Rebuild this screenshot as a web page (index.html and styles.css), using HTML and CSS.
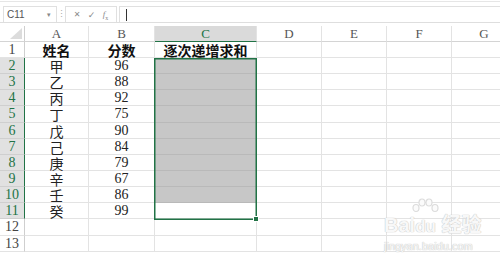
FILE: index.html
```html
<!DOCTYPE html>
<html lang="zh-CN">

<head>
    <meta charset="UTF-8">
    <meta name="viewport" content="width=device-width, initial-scale=1.0">
    <title>逐次递增求和</title>
    <link rel="stylesheet" href="styles.css">
</head>

<body>
    <!-- Formula bar -->
    <div class="formula-bar">
        <div class="name-box">
            <span>C11</span>
            <span class="arrow">▾</span>
        </div>
        <div class="sep">⋮</div>
        <div class="fx-box">
            <span class="fx-icon">✕</span>
            <span class="fx-icon check">✓</span>
            <span class="fx-icon fx"><i>f</i><sub>x</sub></span>
        </div>
        <div class="formula-input"><span class="cursor"></span></div>
    </div>

    <!-- Sheet -->
    <div class="sheet">
        <div class="row head-row">
            <div class="cell rh corner"><span class="tri"></span></div>
            <div class="cell col-a ch">A</div>
            <div class="cell col-b ch">B</div>
            <div class="cell col-c ch active-col">C</div>
            <div class="cell col-d ch">D</div>
            <div class="cell col-e ch">E</div>
            <div class="cell col-f ch">F</div>
            <div class="cell col-g ch">G</div>
        </div>

        <div class="row">
            <div class="cell rh">1</div>
            <div class="cell col-a title">姓名</div>
            <div class="cell col-b title">分数</div>
            <div class="cell col-c title">逐次递增求和</div>
            <div class="cell col-d"></div>
            <div class="cell col-e"></div>
            <div class="cell col-f"></div>
            <div class="cell col-g"></div>
        </div>
        <div class="row">
            <div class="cell rh sel">2</div>
            <div class="cell col-a cn">甲</div>
            <div class="cell col-b num">96</div>
            <div class="cell col-c filled"></div>
            <div class="cell col-d"></div>
            <div class="cell col-e"></div>
            <div class="cell col-f"></div>
            <div class="cell col-g"></div>
        </div>
        <div class="row">
            <div class="cell rh sel">3</div>
            <div class="cell col-a cn">乙</div>
            <div class="cell col-b num">88</div>
            <div class="cell col-c filled"></div>
            <div class="cell col-d"></div>
            <div class="cell col-e"></div>
            <div class="cell col-f"></div>
            <div class="cell col-g"></div>
        </div>
        <div class="row">
            <div class="cell rh sel">4</div>
            <div class="cell col-a cn">丙</div>
            <div class="cell col-b num">92</div>
            <div class="cell col-c filled"></div>
            <div class="cell col-d"></div>
            <div class="cell col-e"></div>
            <div class="cell col-f"></div>
            <div class="cell col-g"></div>
        </div>
        <div class="row tall">
            <div class="cell rh sel">5</div>
            <div class="cell col-a cn">丁</div>
            <div class="cell col-b num">75</div>
            <div class="cell col-c filled"></div>
            <div class="cell col-d"></div>
            <div class="cell col-e"></div>
            <div class="cell col-f"></div>
            <div class="cell col-g"></div>
        </div>
        <div class="row">
            <div class="cell rh sel">6</div>
            <div class="cell col-a cn">戊</div>
            <div class="cell col-b num">90</div>
            <div class="cell col-c filled"></div>
            <div class="cell col-d"></div>
            <div class="cell col-e"></div>
            <div class="cell col-f"></div>
            <div class="cell col-g"></div>
        </div>
        <div class="row">
            <div class="cell rh sel">7</div>
            <div class="cell col-a cn">己</div>
            <div class="cell col-b num">84</div>
            <div class="cell col-c filled"></div>
            <div class="cell col-d"></div>
            <div class="cell col-e"></div>
            <div class="cell col-f"></div>
            <div class="cell col-g"></div>
        </div>
        <div class="row">
            <div class="cell rh sel">8</div>
            <div class="cell col-a cn">庚</div>
            <div class="cell col-b num">79</div>
            <div class="cell col-c filled"></div>
            <div class="cell col-d"></div>
            <div class="cell col-e"></div>
            <div class="cell col-f"></div>
            <div class="cell col-g"></div>
        </div>
        <div class="row">
            <div class="cell rh sel">9</div>
            <div class="cell col-a cn">辛</div>
            <div class="cell col-b num">67</div>
            <div class="cell col-c filled"></div>
            <div class="cell col-d"></div>
            <div class="cell col-e"></div>
            <div class="cell col-f"></div>
            <div class="cell col-g"></div>
        </div>
        <div class="row">
            <div class="cell rh sel">10</div>
            <div class="cell col-a cn">壬</div>
            <div class="cell col-b num">86</div>
            <div class="cell col-c filled"></div>
            <div class="cell col-d"></div>
            <div class="cell col-e"></div>
            <div class="cell col-f"></div>
            <div class="cell col-g"></div>
        </div>
        <div class="row">
            <div class="cell rh sel">11</div>
            <div class="cell col-a cn">癸</div>
            <div class="cell col-b num">99</div>
            <div class="cell col-c"></div>
            <div class="cell col-d"></div>
            <div class="cell col-e"></div>
            <div class="cell col-f"></div>
            <div class="cell col-g"></div>
        </div>
        <div class="row tall">
            <div class="cell rh">12</div>
            <div class="cell col-a"></div>
            <div class="cell col-b"></div>
            <div class="cell col-c"></div>
            <div class="cell col-d"></div>
            <div class="cell col-e"></div>
            <div class="cell col-f"></div>
            <div class="cell col-g"></div>
        </div>
        <div class="row">
            <div class="cell rh">13</div>
            <div class="cell col-a"></div>
            <div class="cell col-b"></div>
            <div class="cell col-c"></div>
            <div class="cell col-d"></div>
            <div class="cell col-e"></div>
            <div class="cell col-f"></div>
            <div class="cell col-g"></div>
        </div>

        <!-- selection frame C2:C11 -->
        <div class="selection"><span class="handle"></span></div>

        <!-- watermark -->
        <div class="watermark">
            <svg class="paw" width="30" height="20" viewBox="0 0 30 20">
                <g fill="#fbfbfb" stroke="#dcdcdc" stroke-width="1.2">
                    <ellipse cx="6" cy="10" rx="3" ry="3.5" />
                    <ellipse cx="12" cy="4.5" rx="3" ry="3.5" />
                    <ellipse cx="19" cy="4.5" rx="3" ry="3.5" />
                    <ellipse cx="25" cy="10" rx="3" ry="3.5" />
                </g>
            </svg>
            <div class="wm-main">Bai<span class="du">du</span> 经验</div>
            <div class="wm-url">jingyan.baidu.com</div>
        </div>
    </div>
</body>

</html>
```

FILE: styles.css
```css
body {
    margin: 0;
    background: #ffffff;
    font-family: "Liberation Serif", "Noto Sans CJK SC", serif;
    overflow: hidden;
    width: 500px;
    height: 257px;
}

/* formula bar */
.formula-bar {
    display: flex;
    align-items: stretch;
    margin-top: 1px;
    border-top: 1px solid #e6e6e6;
    border-bottom: 1px solid #dedede;
    box-sizing: border-box;
    height: 22px;
    padding: 4px 0 0 3px;
}

.name-box {
    width: 54px;
    height: 16px;
    box-sizing: border-box;
    border: 1px solid #e0e0e0;
    border-bottom: none;
    display: flex;
    align-items: center;
    justify-content: space-between;
    padding: 0 5px 0 3px;
    font-family: "Liberation Sans", sans-serif;
    font-size: 10px;
    color: #555;
}

.name-box .arrow {
    font-size: 7px;
    color: #888;
}

.sep {
    width: 8px;
    text-align: center;
    font-size: 9px;
    color: #aaa;
    line-height: 16px;
}

.fx-box {
    width: 52px;
    height: 16px;
    box-sizing: border-box;
    border: 1px solid #e0e0e0;
    border-bottom: none;
    display: flex;
    align-items: center;
    justify-content: space-around;
    padding: 0 4px;
    font-family: "DejaVu Sans", sans-serif;
    color: #8a8a8a;
}

.fx-icon {
    font-size: 8px;
}

.fx-icon.check {
    font-size: 9px;
}

.fx-icon.fx {
    font-family: "Liberation Serif", serif;
    font-size: 9px;
}

.fx-icon.fx sub {
    font-size: 6px;
}

.formula-input {
    flex: 1;
    margin-left: 2px;
    height: 16px;
    box-sizing: border-box;
    border-left: 1px solid #e0e0e0;
    border-top: 1px solid #e0e0e0;
    padding: 2px 0 0 6px;
}

.cursor {
    display: block;
    width: 1px;
    height: 12px;
    background: #333;
}

/* sheet */
.sheet {
    position: relative;
    margin-top: 3px;
}

.row {
    display: flex;
    height: 16px;
}

.row.tall {
    height: 17px;
}

.cell {
    box-sizing: border-box;
    flex: none;
    height: 100%;
    border-right: 1px solid #e3e3e3;
    border-bottom: 1px solid #e3e3e3;
    display: flex;
    align-items: center;
    justify-content: center;
    font-size: 14px;
    line-height: 1;
    color: #222;
}

.rh {
    width: 25px;
    font-size: 14px;
    color: #444;
    border-right-color: #cfcfcf;
}

.rh.sel {
    background: #e1e1e1;
    color: #217346;
    border-right: 1px solid #217346;
    border-bottom-color: #cfcfcf;
}

.col-a { width: 64px; }
.col-b { width: 66px; }
.col-c { width: 102px; }
.col-d { width: 65px; }
.col-e { width: 65px; }
.col-f { width: 65px; }
.col-g { width: 65px; }

.head-row .cell {
    border-bottom-color: #d4d4d4;
    font-size: 13px;
    color: #555;
}

.ch.active-col {
    background: #dadada;
    color: #217346;
    border-bottom: 1px solid #217346;
}

.corner {
    position: relative;
}

.tri {
    position: absolute;
    right: 2px;
    bottom: 2px;
    width: 0;
    height: 0;
    border-left: 12px solid transparent;
    border-bottom: 11px solid #dcdcdc;
}

.title {
    font-family: "Noto Sans CJK SC", sans-serif;
    font-weight: bold;
    font-size: 14px;
    color: #111;
}

.cn {
    font-family: "Noto Sans CJK SC", sans-serif;
    font-size: 14px;
    color: #222;
}

.num {
    font-size: 14px;
}

.filled {
    background: #c7c7c7;
    border-bottom-color: #b9b9b9;
}

/* selection frame over C2:C11 */
.selection {
    position: absolute;
    left: 154px;
    top: 32px;
    width: 103px;
    height: 162px;
    box-sizing: border-box;
    border: 1px solid #217346;
    box-shadow: inset 0 0 0 0.5px #217346;
}

.handle {
    position: absolute;
    right: -3px;
    bottom: -3px;
    width: 4px;
    height: 4px;
    background: #217346;
    border: 1px solid #fff;
}

/* faint watermark */
.watermark {
    position: absolute;
    left: 382px;
    top: 172px;
    width: 110px;
    color: #f8f8f8;
    font-family: "Liberation Sans", "Noto Sans CJK SC", sans-serif;
    text-shadow: 0 0 1px #c4c4c4, 0 0 1px #c4c4c4;
}

.paw {
    display: block;
    margin: 0 0 -3px 28px;
}

.wm-main {
    font-size: 20px;
    font-weight: bold;
    line-height: 20px;
    padding-left: 2px;
}

.wm-main .du {
    font-size: 17px;
}

.wm-url {
    font-size: 11px;
    line-height: 14px;
    padding-left: 2px;
    margin-top: 2px;
}
```
